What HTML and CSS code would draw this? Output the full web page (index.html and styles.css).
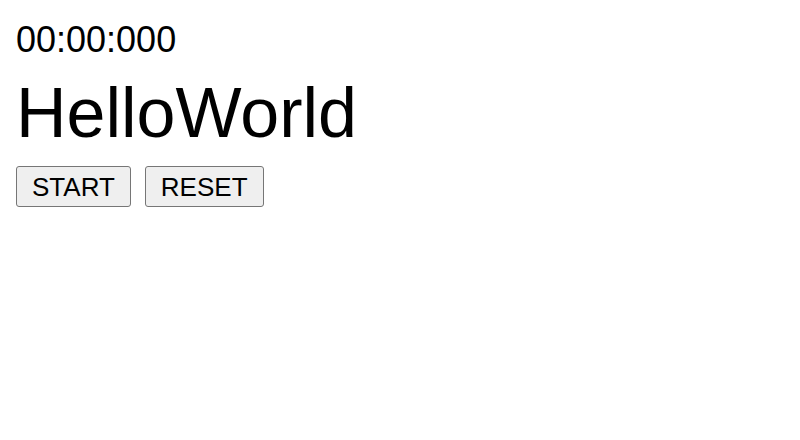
FILE: index.html
```html
<!DOCTYPE html>
<html>
<head>
<meta charset="utf-8">
<link rel="stylesheet" href="styles.css">
</head>
<body>
<div class="app">
  <div class="timer">00:00:000</div>
  <h1 class="title">HelloWorld</h1>
  <div class="controls">
    <button class="btn">START</button>
    <button class="btn">RESET</button>
  </div>
</div>
</body>
</html>
```
FILE: styles.css
```css
html, body {
  margin: 0;
  padding: 0;
  background: #ffffff;
}
.app {
  padding: 16px;
  font-family: "Liberation Sans", Arial, sans-serif;
  color: #000;
}
.timer {
  font-size: 36px;
  line-height: 48px;
}
.title {
  font-size: 70px;
  font-weight: normal;
  line-height: 80px;
  margin: 9px 0 0;
}
.controls {
  display: flex;
  gap: 14px;
  margin-top: 13px;
}
.btn {
  font-family: "Liberation Sans", Arial, sans-serif;
  font-size: 26px;
  line-height: 30px;
  padding: 5px 15px 4px;
  background: #efefef;
  border: 1px solid #767676;
  border-radius: 3px;
  color: #000;
}
```
